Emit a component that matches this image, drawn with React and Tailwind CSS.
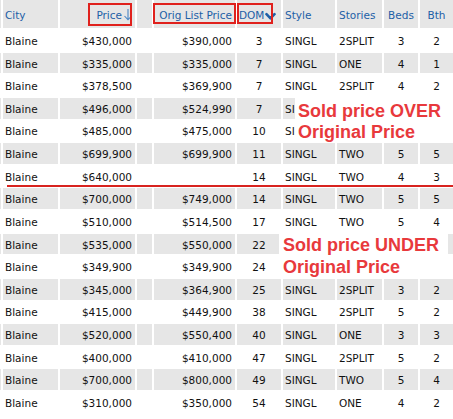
const rows = [
  ['$430,000', '$390,000', '3', 'SINGL', '2SPLIT', '3', '2'],
  ['$335,000', '$335,000', '7', 'SINGL', 'ONE', '4', '1'],
  ['$378,500', '$369,900', '7', 'SINGL', '2SPLIT', '4', '2'],
  ['$496,000', '$524,990', '7', 'SI', '', '', ''],
  ['$485,000', '$475,000', '10', 'SI', '', '', ''],
  ['$699,900', '$699,900', '11', 'SINGL', 'TWO', '5', '5'],
  ['$640,000', '', '14', 'SINGL', 'TWO', '4', '3'],
  ['$700,000', '$749,000', '14', 'SINGL', 'TWO', '5', '5'],
  ['$510,000', '$514,500', '17', 'SINGL', 'TWO', '5', '4'],
  ['$535,000', '$550,000', '22', '', '', '', ''],
  ['$349,900', '$349,900', '24', '', '', '', ''],
  ['$345,000', '$364,900', '25', 'SINGL', '2SPLIT', '3', '2'],
  ['$415,000', '$449,900', '38', 'SINGL', '2SPLIT', '5', '2'],
  ['$520,000', '$550,400', '40', 'SINGL', 'ONE', '3', '3'],
  ['$400,000', '$410,000', '47', 'SINGL', '2SPLIT', '5', '2'],
  ['$700,000', '$800,000', '49', 'SINGL', 'TWO', '5', '4'],
  ['$310,000', '$350,000', '54', 'SINGL', 'ONE', '4', '2'],
]

function ThinArrow() {
  return (
    <svg width="10" height="13" viewBox="0 0 10 13" className="inline-block align-[-2px] ml-[1px]">
      <path d="M5 1 V11.5 M1.5 8 L5 11.8 L8.5 8" stroke="#4a86c4" strokeWidth="1.1" fill="none" />
    </svg>
  )
}

function BoldArrow() {
  return (
    <svg width="11" height="11" viewBox="0 0 11 11" className="inline-block align-[-2px] ml-[1px]">
      <path d="M1.5 4.2 L5.5 8.4 L9.5 4.2" stroke="#1f5fa6" strokeWidth="2.6" fill="none" strokeLinecap="round" strokeLinejoin="round" />
    </svg>
  )
}

export default function App() {
  const cell = (i) => (i % 2 === 1 ? 'bg-[#e6e6e6] pt-[3px]' : 'bg-white pt-[3px]')
  return (
    <div
      className="relative w-[453px] h-[419px] overflow-hidden bg-white text-[10.5px] text-[#111]"
      style={{ fontFamily: '"DejaVu Sans", Verdana, sans-serif' }}
    >
      <table className="table-fixed border-separate border-spacing-[2px] w-[476px] -ml-[21px] -mt-[2px]">
        <colgroup>
          <col className="w-[20px]" />
          <col className="w-[55px]" />
          <col className="w-[75px]" />
          <col className="w-[15px]" />
          <col className="w-[81px]" />
          <col className="w-[44px]" />
          <col className="w-[52px]" />
          <col className="w-[45px]" />
          <col className="w-[34px]" />
          <col className="w-[33px]" />
        </colgroup>
        <thead>
          <tr className="h-[28px] text-[#1d5fa7] font-normal">
            <th className="bg-[#e6e6e6]" />
            <th className="bg-[#e6e6e6] pt-[3px] text-left pl-[2px] font-normal">City</th>
            <th className="bg-[#e6e6e6] pt-[3px] text-right pr-[2px] font-normal whitespace-nowrap">
              Price<ThinArrow />
            </th>
            <th className="bg-[#e6e6e6]" />
            <th className="bg-[#e6e6e6] pt-[3px] text-right pr-[3px] font-normal whitespace-nowrap">Orig List Price</th>
            <th className="bg-[#e6e6e6] pt-[3px] text-left pl-[2px] font-normal whitespace-nowrap">
              DOM<BoldArrow />
            </th>
            <th className="bg-[#e6e6e6] pt-[3px] text-left pl-[2px] font-normal">Style</th>
            <th className="bg-[#e6e6e6] pt-[3px] text-left pl-[2px] font-normal">Stories</th>
            <th className="bg-[#e6e6e6] pt-[3px] text-center font-normal">Beds</th>
            <th className="bg-[#e6e6e6] pt-[3px] text-center font-normal">Bth</th>
          </tr>
        </thead>
        <tbody>
          {rows.map((r, i) => (
            <tr key={i} className="h-[20.625px]">
              <td className={cell(i)} />
              <td className={`${cell(i)} pl-[2px]`}>Blaine</td>
              <td className={`${cell(i)} text-right pr-[3px]`}>{r[0]}</td>
              <td className={cell(i)} />
              <td className={`${cell(i)} text-right pr-[3px]`}>{r[1]}</td>
              <td className={`${cell(i)} text-center`}>{r[2]}</td>
              <td className={`${cell(i)} pl-[2px]`}>{r[3]}</td>
              <td className={`${cell(i)} pl-[2px]`}>{r[4]}</td>
              <td className={`${cell(i)} text-center`}>{r[5]}</td>
              <td className={`${cell(i)} text-center`}>{r[6]}</td>
            </tr>
          ))}
        </tbody>
      </table>

      {/* red highlight boxes on the header */}
      <div className="absolute left-[88px] top-[3px] w-[44px] h-[23px] border-2 border-[#e0211d]" />
      <div className="absolute left-[153px] top-[3px] w-[83px] h-[21px] border-2 border-[#e0211d]" />
      <div className="absolute left-[237px] top-[3px] w-[36px] h-[21px] border-2 border-[#e0211d]" />

      {/* divider line */}
      <div className="absolute left-[7px] right-0 top-[185px] h-[2px] bg-[#d8231f]" />

      {/* notes */}
      <div
        className="absolute left-[295px] top-[98px] w-[158px] h-[43px] bg-white pl-[3px] pt-[3px] text-[18px] leading-[20.5px] font-bold text-[#e8393c]"
        style={{ fontFamily: '"Liberation Sans", Arial, sans-serif' }}
      >
        Sold price OVER
        <br />
        Original Price
      </div>
      <div
        className="absolute left-[279px] top-[233px] w-[169px] h-[45px] bg-white pl-[4px] pt-[1px] text-[18px] leading-[22px] font-bold text-[#e8393c]"
        style={{ fontFamily: '"Liberation Sans", Arial, sans-serif' }}
      >
        Sold price UNDER
        <br />
        Original Price
      </div>
    </div>
  )
}
